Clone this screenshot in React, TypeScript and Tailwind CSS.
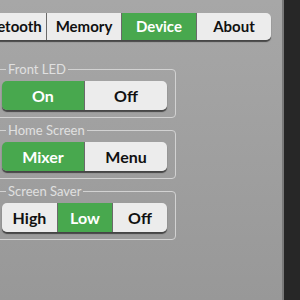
import React from 'react';

const tabs = ['Bluetooth', 'Memory', 'Device', 'About'];

function Segmented({ items, active, widths }: { items: string[]; active: number; widths: string[] }) {
    return (
        <div className="flex rounded-[5px] overflow-hidden shadow-[0_2px_1px_rgba(40,40,40,0.75)]">
            {items.map((label, i) => (
                <div
                    key={label}
                    className={`${widths[i]} h-[29px] flex items-center justify-center text-[16px] font-bold ${
                        i === active ? 'bg-[#48a84e] text-white' : 'bg-[#ececec] text-[#111]'
                    } ${i > 0 ? 'border-l border-[#6a6a6a]' : ''}`}
                >
                    {label}
                </div>
            ))}
        </div>
    );
}

function Group({ title, children }: { title: string; children: React.ReactNode }) {
    return (
        <fieldset className="ml-[-10px] w-[186px] border-[1.5px] border-[#d2d2d2] rounded-[4px] pl-[11px] pr-[8px] pb-[7px]">
            <legend className="ml-[4px] px-[2px] text-[13px] leading-[14px] text-[#e0e0e0]">{title}</legend>
            <div className="mt-[5px]">{children}</div>
        </fieldset>
    );
}

export default function App() {
    return (
        <div className="w-[300px] h-[300px] flex overflow-hidden" style={{ fontFamily: 'Lato, "Open Sans", sans-serif' }}>
            <div className="w-[282px] h-full bg-gradient-to-b from-[#a7a7a7] to-[#989898] flex flex-col">
                {/* Tabs */}
                <div className="mt-[13px] ml-[-29px] flex w-[300px] rounded-[5px] overflow-hidden shadow-[0_2px_1px_rgba(40,40,40,0.75)]">
                    {tabs.map((t, i) => (
                        <div
                            key={t}
                            className={`w-[75px] h-[27px] flex items-center justify-center text-[15px] font-bold ${
                                t === 'Device' ? 'bg-[#48a84e] text-white' : 'bg-[#ececec] text-[#111]'
                            } ${i > 0 ? 'border-l border-[#6a6a6a]' : ''}`}
                        >
                            {t}
                        </div>
                    ))}
                </div>

                <div className="mt-[22px] flex flex-col gap-[5px]">
                    <Group title="Front LED">
                        <Segmented items={['On', 'Off']} active={0} widths={['w-[82px]', 'w-[83px]']} />
                    </Group>
                    <Group title="Home Screen">
                        <Segmented items={['Mixer', 'Menu']} active={0} widths={['w-[82px]', 'w-[83px]']} />
                    </Group>
                    <Group title="Screen Saver">
                        <Segmented items={['High', 'Low', 'Off']} active={1} widths={['w-[55px]', 'w-[55px]', 'w-[55px]']} />
                    </Group>
                </div>
            </div>
            <div className="w-[2px] h-full bg-[#7a7a7a]" />
            <div className="flex-1 h-full bg-[#272727]" />
        </div>
    );
}
